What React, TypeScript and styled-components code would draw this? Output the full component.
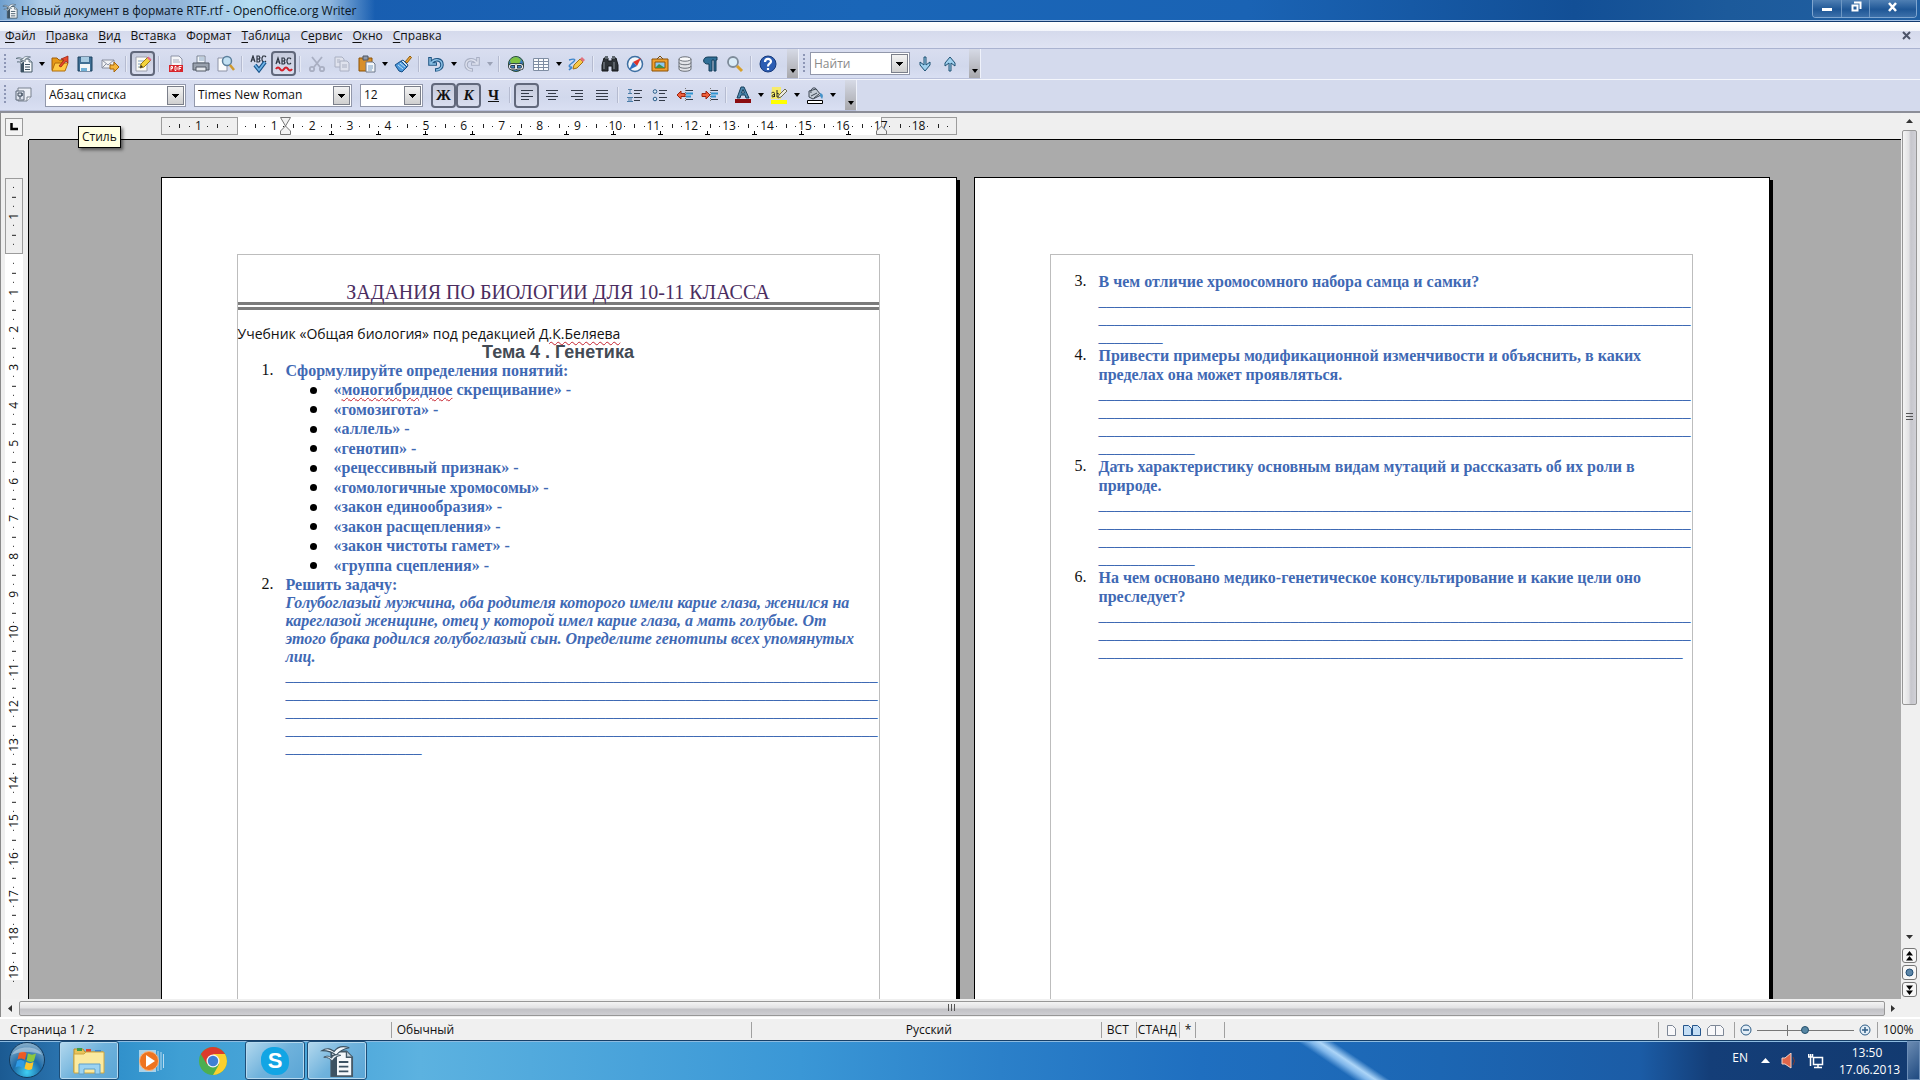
import React from "react";
import styled, { createGlobalStyle, css } from "styled-components";

const GlobalStyle = createGlobalStyle`
  * { box-sizing: border-box; }
  html, body { margin: 0; padding: 0; }
  body { background: #ababab; overflow: hidden; }
  button, select, input { font: inherit; color: inherit; margin: 0; }
`;

const UI_FONT = `"Open Sans", "Noto Sans", sans-serif`;
const DOC_FONT = `"Liberation Serif", "Times New Roman", serif`;

const Window = styled.div`
  height: 100vh;
  display: flex;
  flex-direction: column;
  font: 12px/16px ${UI_FONT};
  color: #111;
`;

/* ---------- title bar ---------- */

const TitleBar = styled.header`
  display: flex;
  height: 22px;
  flex: none;
  padding-left: 2px;
  border-bottom: 1px solid #12396f;
  box-shadow: inset 0 -1px 0 #a9c4e6;
  background:
    linear-gradient(90deg, #6f9fce 0, #b2cfe9 40px, #a3c0e0 90px, #8db0d6 170px, #b5dcf2 250px, #8fb7df 330px, rgba(80, 130, 200, 0) 375px),
    linear-gradient(90deg, #1758ab 0, #1a66b8 45%, #1a63b4 65%, #124f96 82%, #1c5a9b 90%, #2160a3 100%);
`;

const TitleText = styled.h1`
  margin: 0 auto 0 3px;
  font-size: 12px;
  line-height: 22px;
  font-weight: 400;
  color: #0c1826;
`;

const TitleIcon = styled.span`
  display: flex;
  align-items: center;
`;

const WindowButtons = styled.div`
  display: flex;
  height: 18px;
  margin-right: 3px;
  border: 1px solid #7fa6d0;
  border-top: 0;
  border-radius: 0 0 4px 4px;
  overflow: hidden;
`;

const WindowButton = styled.button<{ $wide?: boolean }>`
  display: flex;
  align-items: center;
  justify-content: center;
  width: ${(p) => (p.$wide ? 47 : 28)}px;
  padding: 0 0 3px;
  border: 0;
  border-left: 1px solid #6d97c4;
  background: linear-gradient(#4f7fb3, #1f5796 55%, #3c70aa);
  &:first-child { border-left: 0; }
`;

/* ---------- menu ---------- */

const MenuBar = styled.nav`
  display: flex;
  align-items: center;
  height: 26px;
  flex: none;
  padding: 2px 8px 0 5px;
  gap: 10px;
  background: linear-gradient(#fff 0, #f3f5fb 9px, #d5daec 9px, #dfe3f3 100%);
`;

const MenuItem = styled.button`
  padding: 0;
  border: 0;
  background: none;
  line-height: 18px;
  u { text-underline-offset: 2px; }
`;

const CloseDocument = styled(MenuItem)`
  display: flex;
  margin-left: auto;
`;

/* ---------- toolbars ---------- */

const ToolbarArea = styled.div`
  flex: none;
  background: #d4daed;
  border-bottom: 2px solid #8c8e98;
`;

const ToolbarRow = styled.div`
  display: flex;
  height: 31px;
  border-top: 1px solid #aab3d0;
  & + & {
    height: 32px;
    border-top-color: #f4f6fc;
  }
`;

const Toolbar = styled.div`
  display: flex;
  align-items: center;
  padding-left: 4px;
  border-right: 1px solid #eef1fa;
  border-bottom: 1px solid #b9c0da;
  background: linear-gradient(#d9def0, #d1d8ec 60%, #d9dff2);
`;

const Handle = styled.span`
  width: 2px;
  height: 20px;
  margin-right: 5px;
  background: repeating-linear-gradient(#8d96b5 0 2px, transparent 2px 4px);
`;

const ToolButton = styled.button<{ $pressed?: boolean }>`
  display: flex;
  align-items: center;
  justify-content: center;
  width: 25px;
  height: 25px;
  padding: 0;
  border: ${(p) => (p.$pressed ? "2px solid #61687b" : "0")};
  border-radius: 4px;
  background: ${(p) => (p.$pressed ? "linear-gradient(#c6cbdc, #d9deef)" : "none")};
`;

const DropButton = styled.button<{ $dim?: boolean }>`
  width: 11px;
  height: 24px;
  padding: 0;
  border: 0;
  background: none;
  &::after {
    content: "";
    display: block;
    width: 0;
    margin: 0 auto;
    border: 3px solid transparent;
    border-top: 4px solid ${(p) => (p.$dim ? "#9ba2b6" : "#000")};
    border-bottom: 0;
  }
`;

const Separator = styled.span`
  width: 2px;
  height: 16px;
  margin: 0 3px;
  border-left: 1px solid #b5bbd0;
  border-right: 1px solid #e6eaf6;
`;

const EndCap = styled.button`
  display: flex;
  align-items: flex-end;
  justify-content: center;
  align-self: stretch;
  width: 11px;
  margin-left: 7px;
  padding: 0 0 5px;
  border: 0;
  background: linear-gradient(#d6dae6, #a8a8ac);
  &::after {
    content: "";
    border: 3px solid transparent;
    border-top: 4px solid #000;
    border-bottom: 0;
  }
`;

const Combo = styled.label<{ $width: number; $dim?: boolean }>`
  display: grid;
  grid-template-columns: 1fr 19px;
  width: ${(p) => p.$width}px;
  height: 23px;
  margin-right: ${(p) => (p.$dim ? 2 : 8)}px;
  border: 1px solid #9298ab;
  background: #fff;
  color: ${(p) => (p.$dim ? "#8a8a8a" : "#111")};
  select, input {
    grid-area: 1 / 1 / 2 / 3;
    min-width: 0;
    width: 100%;
    padding: 0 20px 0 3px;
    border: 0;
    outline: 0;
    appearance: none;
    background: none;
    line-height: 20px;
  }
  input::placeholder { color: #8a8a8a; opacity: 1; }
  &::after {
    content: "";
    grid-area: 1 / 2;
    margin: 1px;
    border: 1px solid #7b7f8a;
    pointer-events: none;
    background:
      linear-gradient(#000, #000) 50% 7px / 7px 1px no-repeat,
      linear-gradient(#000, #000) 50% 8px / 5px 1px no-repeat,
      linear-gradient(#000, #000) 50% 9px / 3px 1px no-repeat,
      linear-gradient(#000, #000) 50% 10px / 1px 1px no-repeat,
      linear-gradient(#f3f3f3, #cfcfcf);
  }
`;

const Glyph = styled.span<{ $italic?: boolean; $underline?: boolean }>`
  font: bold 15px/18px ${DOC_FONT};
  font-style: ${(p) => (p.$italic ? "italic" : "normal")};
  text-decoration: ${(p) => (p.$underline ? "underline" : "none")};
`;

const StylesGroup = styled.div`
  margin-right: 9px;
`;

const TooltipAnchor = styled.div`
  position: relative;
`;

const Tooltip = styled.span`
  position: absolute;
  z-index: 5;
  left: 33px;
  top: 42px;
  padding: 1px 3px;
  border: 1px solid #000;
  background: #ffffe1;
  line-height: 18px;
  white-space: nowrap;
  box-shadow: 2px 2px 3px rgba(0, 0, 0, 0.5);
`;

/* ---------- work area ---------- */

const WorkArea = styled.main`
  flex: 1;
  min-height: 0;
  display: grid;
  grid-template: 27px minmax(0, 1fr) 18px / 28px minmax(0, 1fr) 19px;
  border-left: 1px solid #8a8a8a;
  background: #efefef;
`;

const Corner = styled.div`
  display: flex;
  align-items: center;
  justify-content: center;
  padding-right: 3px;
`;

const TabKind = styled.button`
  display: flex;
  align-items: center;
  justify-content: center;
  width: 18px;
  height: 18px;
  padding: 0;
  border: 1px solid #9a9a9a;
  background: #f3f3f3;
`;

const Spread = styled.div`
  display: grid;
  grid-template-columns: 796px 796px;
  justify-content: center;
  column-gap: 17px;
`;

const RulerStrip = styled(Spread)`
  align-items: center;
  height: 27px;
  border-bottom: 1px solid #000;
`;

const Ruler = styled.div`
  display: grid;
  grid-template: 18px / 77px 1fr 76px;
  color: #111;
`;

const RulerMargin = styled.span<{ $area: string }>`
  grid-area: ${(p) => p.$area};
  border: 1px solid #9c9c9c;
  background: #efefef;
`;

const RulerBody = styled.span<{ $area: string }>`
  grid-area: ${(p) => p.$area};
  background: #fff;
`;

const Scale = styled.div`
  grid-area: 1 / 1 / 2 / 4;
  display: flex;
`;

const ScaleCell = styled.span<{ $half?: "start" | "end" }>`
  flex: ${(p) => (p.$half ? 1 : 2)} 0 0;
  min-width: 0;
  text-align: center;
  line-height: 18px;
  ${(p) =>
    !p.$half &&
    css`
      background:
        linear-gradient(#222, #222) 0 50% / 1px 4px no-repeat,
        linear-gradient(#222, #222) 25% 50% / 1px 1px no-repeat,
        linear-gradient(#222, #222) 75% 50% / 1px 1px no-repeat;
    `}
  ${(p) =>
    p.$half === "start" &&
    css`background: linear-gradient(#222, #222) 50% 50% / 1px 1px no-repeat;`}
  ${(p) =>
    p.$half === "end" &&
    css`
      background:
        linear-gradient(#222, #222) 0 50% / 1px 4px no-repeat,
        linear-gradient(#222, #222) 50% 50% / 1px 1px no-repeat;
    `}
`;

const TabStops = styled.div`
  grid-area: 1 / 2;
  display: flex;
  align-items: flex-end;
  padding-left: 71px;
  overflow: hidden;
`;

const TabStop = styled.i`
  flex: none;
  width: 47px;
  height: 4px;
  background:
    linear-gradient(#000, #000) 22px 0 / 1px 4px no-repeat,
    linear-gradient(#000, #000) 20px 3px / 5px 1px no-repeat;
`;

const IndentMarkers = styled.div`
  grid-area: 1 / 1 / 2 / 4;
  display: flex;
  justify-content: space-between;
  padding: 0 70px 0 119px;
`;

const VRulerStrip = styled.div`
  padding: 38px 5px 0 4px;
  border-right: 1px solid #000;
  overflow: hidden;
`;

const VRuler = styled.div`
  display: grid;
  grid-template: 76px 726px / 18px;
`;

const VScale = styled.div`
  grid-area: 1 / 1 / 3 / 2;
  display: flex;
  flex-direction: column;
  height: 813px;
`;

const VCell = styled.span<{ $half?: boolean }>`
  flex: ${(p) => (p.$half ? 1 : 2)} 0 0;
  display: flex;
  align-items: center;
  justify-content: center;
  min-height: 0;
  writing-mode: vertical-rl;
  transform: rotate(180deg);
  line-height: 18px;
  background: ${(p) =>
    p.$half
      ? "linear-gradient(#222, #222) 50% 50% / 1px 1px no-repeat"
      : `linear-gradient(#222, #222) 50% 100% / 4px 1px no-repeat,
         linear-gradient(#222, #222) 50% 25% / 1px 1px no-repeat,
         linear-gradient(#222, #222) 50% 75% / 1px 1px no-repeat`};
`;

const Canvas = styled(Spread)`
  padding-top: 37px;
  overflow: hidden;
  background: #ababab;
`;

const Page = styled.article`
  padding: 76px 76px 0 75px;
  border: 1px solid #000;
  border-bottom: 0;
  background: #fff;
  box-shadow: 3px 3px 0 #000;
`;

const TextFrame = styled.div`
  height: 100%;
  border: 1px solid #bdbdbd;
  border-bottom: 0;
  font: 16px/18px ${DOC_FONT};
  color: #111;
  white-space: nowrap;
`;

const DocTitle = styled.h2`
  margin: 27px 0 0;
  border-bottom: 8px double #7b7b7b;
  font-size: 20px;
  line-height: 20px;
  font-weight: 400;
  text-align: center;
  color: #4b2d5f;
`;

const Source = styled.p`
  margin: 15px 0 0;
  font: 14px/18px ${UI_FONT};
`;

const Topic = styled.h3`
  margin: 0;
  font: bold 18px/18px "Liberation Sans", Arial, sans-serif;
  text-align: center;
  color: #434a54;
`;

const Misspelled = styled.span`
  text-decoration: underline wavy #c4202c 1px;
  text-underline-offset: 2px;
`;

const Tasks = styled.ol<{ $top?: number }>`
  margin: 0;
  padding: ${(p) => p.$top || 0}px 0 0 24px;
  list-style: none;
`;

const Task = styled.li`
  display: grid;
  grid-template-columns: 24px 1fr;
`;

const TaskBody = styled.div`
  font-weight: bold;
  color: #3f69b4;
`;

const Question = styled.p`
  margin: 0;
  line-height: 19px;
`;

const Problem = styled.p`
  margin: 0;
  font-style: italic;
`;

const Blanks = styled.div`
  padding-top: 1px;
  font-weight: 400;
`;

const Blank = styled.p`
  margin: 0;
`;

const Terms = styled.ul`
  margin: 0;
  padding: 0 0 0 24px;
  list-style: none;
`;

const Term = styled.li`
  display: flex;
  align-items: center;
  gap: 17px;
  line-height: 20px;
  &:nth-child(even) { line-height: 19px; }
  &::before {
    content: "";
    width: 7px;
    height: 7px;
    border-radius: 50%;
    background: #000;
  }
`;

/* ---------- scroll bars ---------- */

const VScroll = styled.div`
  grid-area: 1 / 3 / 3 / 4;
  display: flex;
  flex-direction: column;
  align-items: center;
  padding: 0 2px 2px 0;
  background: #f0f0f0;
`;

const ArrowButton = styled.button`
  display: flex;
  align-items: center;
  justify-content: center;
  width: 17px;
  height: 17px;
  padding: 0;
  border: 0;
  background: none;
`;

const VTrack = styled.div`
  flex: 1;
  display: flex;
  flex-direction: column;
`;

const VThumb = styled.div`
  display: flex;
  align-items: center;
  justify-content: center;
  width: 15px;
  height: 72%;
  border: 1px solid #979797;
  border-radius: 2px;
  background: linear-gradient(90deg, #f4f4f4, #e2e2e4 45%, #c6c6cc 60%, #d0d0d6);
`;

const NavButton = styled.button`
  display: flex;
  align-items: center;
  justify-content: center;
  width: 15px;
  height: 15px;
  margin-top: 2px;
  padding: 0;
  border: 1px solid #777;
  border-radius: 3px;
  background: #f7f7f7;
`;

const HScroll = styled.div`
  grid-area: 3 / 1 / 4 / 4;
  display: flex;
  align-items: center;
  padding: 0 18px 0 1px;
  background: #f0f0f0;
`;

const HThumb = styled.div`
  display: flex;
  align-items: center;
  justify-content: center;
  flex: 1;
  height: 15px;
  border: 1px solid #979797;
  border-radius: 2px;
  background: linear-gradient(#f4f4f4, #e2e2e4 45%, #c2c2c6 55%, #cfcfd3);
`;

/* ---------- status bar ---------- */

const StatusBar = styled.footer`
  display: flex;
  align-items: center;
  flex: none;
  height: 23px;
  padding: 1px 0 0 10px;
  border-top: 2px solid #fff;
  background: #f0f0f0;
`;

const StatusField = styled.span<{ $width?: number; $grow?: number; $center?: boolean; $tight?: boolean }>`
  display: flex;
  align-items: center;
  justify-content: ${(p) => (p.$center ? "center" : "flex-start")};
  ${(p) => (p.$grow ? css`flex: ${p.$grow} 0 0;` : css`flex: none; width: ${p.$width}px;`)}
  height: 16px;
  padding-left: ${(p) => (p.$tight ? 1 : 5)}px;
  border-left: 1px solid #a0a0a0;
  white-space: nowrap;
  &:first-child { border: 0; padding: 0; }
`;

const PlainButton = styled.button`
  display: flex;
  padding: 0;
  border: 0;
  background: none;
`;

const ViewModes = styled.span`
  display: flex;
  align-items: center;
  gap: 5px;
  padding-left: 2px;
`;

const ZoomSlider = styled.input`
  appearance: none;
  width: 97px;
  height: 16px;
  margin: 0 5px;
  background:
    linear-gradient(#777, #777) 0 50% / 100% 1px no-repeat,
    linear-gradient(#777, #777) 30px 50% / 1px 11px no-repeat;
  &::-webkit-slider-thumb {
    appearance: none;
    width: 8px;
    height: 8px;
    border: 1px solid #24506c;
    border-radius: 50%;
    background: #5686a3;
  }
`;

/* ---------- task bar ---------- */

const TaskBar = styled.nav`
  display: flex;
  align-items: stretch;
  flex: none;
  height: 40px;
  padding-left: 7px;
  border-top: 1px solid #174069;
  box-shadow: inset 0 1px 0 #8dbbe0;
  color: #fff;
  background: linear-gradient(90deg, #1b5a92 0, #2a73ae 60px, #2f8fca 110px, #3f9fd4 180px, #4ea8db 340px, #5cb2e0 420px, #48a2da 640px, #3a97d6 800px, #2b80c9 1000px, #1f6fc0 1200px, #1c66b3 1440px, #1b5ca6 1640px, #143e78 1710px, #123a70 100%);
`;

const StartButton = styled.button`
  width: 40px;
  margin-right: 12px;
  padding: 0;
  border: 0;
  background: none;
`;

const TaskButton = styled.button<{ $open?: boolean }>`
  display: flex;
  align-items: center;
  justify-content: center;
  width: 60px;
  margin-right: 2px;
  padding: 0;
  border: 1px solid ${(p) => (p.$open ? "#1d4e78" : "transparent")};
  border-radius: 3px;
  background: ${(p) => (p.$open ? "linear-gradient(135deg, #b4d9ee, #6fb2dc 50%, #5aa5d5)" : "none")};
  box-shadow: ${(p) => (p.$open ? "inset 0 0 0 1px #b5d9ef" : "none")};
`;

const LightStreak = styled.span`
  flex: 1;
  background: linear-gradient(34deg, transparent 551px, #7fb6ea 558px, #acd5f8 563px, transparent 571px);
`;

const Tray = styled.div`
  display: flex;
  align-items: center;
  gap: 11px;
`;

const Language = styled.span`
  padding-bottom: 6px;
  margin-right: 2px;
`;

const Clock = styled.time`
  text-align: center;
  line-height: 17px;
  margin: 0 12px 0 4px;
  width: 56px;
`;

const ShowDesktop = styled.button`
  width: 13px;
  padding: 0;
  border: 1px solid #6d8fb8;
  background: linear-gradient(135deg, #6b8bb2, #1f4a80);
`;

/* ---------- drawings ---------- */

const ICONS: Record<string, React.ReactNode> = {
  writer: (
    <>
      <path d="M6 4h8l3 3v10H6z" fill="#f6f9fb" stroke="#465a68" />
      <path d="M6 6v11h3V5z" fill="#3c5262" />
      <path d="M14 4v3h3" fill="#c5d4de" stroke="#465a68" strokeWidth=".7" />
      <path d="M1 3.500c3-2 5-.5 6.500.5 2-3 5-3 8-2-3 .5-5 1.500-7 4-2-2-4-2.500-7.500-2.500z" fill="#f2f7fa" stroke="#3c5262" strokeWidth=".6" />
      <path d="M2 7c2-1 3-.5 4 .5 1.500-2 3-2 5-1.500-2 .5-3.500 1-4.500 3C5 7.500 4 7 2 7z" fill="#f2f7fa" stroke="#3c5262" strokeWidth=".5" />
      <path d="M10 9.500h5M10 12h5M10 14.500h5" stroke="#3c5262" />
    </>
  ),
  open: (
    <>
      <path d="M1 15V3h5l2 2h4v10z" fill="#e79a17" stroke="#a15c08" />
      <path d="M1 16l3-8h13l-3 8z" fill="#ffc944" stroke="#b06c0c" />
      <path d="M8 11l5-6-3-1 7-3v7l-2-2-5 6z" fill="#e8482b" stroke="#8f1d0c" strokeWidth=".7" />
    </>
  ),
  save: (
    <>
      <path d="M2 2h14v14H2z" fill="#3f6f94" stroke="#1d4260" />
      <path d="M5 2h8v5H5z" fill="#a8cbe2" />
      <path d="M4 9h10v7H4z" fill="#f3f6f8" />
      <path d="M5 13h6v3H5z" fill="#6fb0d6" />
    </>
  ),
  mail: (
    <>
      <path d="M1 5h12v8H1z" fill="#f1f2f5" stroke="#8b90a0" />
      <path d="M1 5l6 5 6-5M1 13l4-4M13 13L9 9" fill="none" stroke="#8b90a0" />
      <path d="M9 10h4V7l5 5-5 5v-3H9z" fill="#f5b63c" stroke="#a8660a" />
    </>
  ),
  edit: (
    <>
      <path d="M2 2h11v14H2z" fill="#fbfbf4" stroke="#9b9fae" />
      <path d="M4 6h6M4 9h4M4 12h3" stroke="#7c9cbc" />
      <path d="M6 13l1-4 7-7 3 3-7 7z" fill="#f4d43c" stroke="#9b7a10" />
      <path d="M13 3l1.500-1.500 3 3L16 6z" fill="#e06a92" />
      <path d="M6 13l1-3 2 2z" fill="#333" />
    </>
  ),
  pdf: (
    <>
      <path d="M4 1h8l3 3v7H4z" fill="#f5f6f9" stroke="#8d93a6" />
      <path d="M6 5h6M6 7h7" stroke="#a7adbd" />
      <path d="M2 10h14v7H2z" fill="#d8262c" />
      <path d="M4 15.500v-4h1.500v2H4M8 11.500v4h1l1-1v-2l-1-1zM12 15.500v-4h2.500M12 13.500h2" fill="none" stroke="#fff" />
    </>
  ),
  print: (
    <>
      <path d="M5 1h8v7H5z" fill="#f2f6fa" stroke="#7b8494" />
      <path d="M7 3h5M7 5h5" stroke="#8aa6c2" />
      <path d="M1 8h16v7H1z" fill="#9aa2ae" stroke="#525a67" />
      <path d="M4 12h10v4H4z" fill="#e6e9ee" stroke="#525a67" />
    </>
  ),
  preview: (
    <>
      <path d="M1 3h9v13H1z" fill="#fbfcfd" stroke="#8d93a6" />
      <circle cx="10" cy="6" r="4.500" fill="#c2e0f3" stroke="#5b7f9c" strokeWidth="1.500" />
      <path d="M13 10l4 5" stroke="#d09a2e" strokeWidth="2.500" />
    </>
  ),
  check: (
    <>
      <path d="M1 7l2-6 2 6M2 5h2M7 1v6h2l1-1-1-2H7h2l1-1-1-2zM16 2l-1-1h-2l-1 2v2l1 2h2l1-1" fill="none" stroke="#2c3440" strokeWidth="1.200" />
      <path d="M5 10l4 5 6-8" fill="none" stroke="#17538a" strokeWidth="4" />
      <path d="M5 10l4 5 6-8" fill="none" stroke="#6db2e6" strokeWidth="1.800" />
    </>
  ),
  autocheck: (
    <>
      <path d="M1 9l2-6 2 6M2 7h2M7 3v6h2l1-1-1-2H7h2l1-1-1-2zM16 4l-1-1h-2l-1 2v2l1 2h2l1-1" fill="none" stroke="#2c3440" strokeWidth="1.200" />
      <path d="M1 14q2-3 4 0t4 0t4 0t4 0" fill="none" stroke="#d3202a" strokeWidth="2.200" />
    </>
  ),
  cut: (
    <g fill="none" stroke="#a9afc2" strokeWidth="1.800">
      <path d="M4 2l8 10M14 2L6 12" />
      <circle cx="4" cy="14" r="2.200" />
      <circle cx="14" cy="14" r="2.200" />
    </g>
  ),
  copy: (
    <g fill="#dfe2ed" stroke="#aab0c2">
      <path d="M2 2h7l2 2v8H2z" />
      <path d="M7 6h7l2 2v8H7z" />
      <path d="M4 5h3M4 7h3M9 10h5M9 12h5" />
    </g>
  ),
  paste: (
    <>
      <path d="M1 3h13v13H1z" fill="#d98f28" stroke="#8c5207" />
      <path d="M5 1h5v4H5z" fill="#8f98a8" stroke="#4c5563" />
      <path d="M8 7h7l2 2v8H8z" fill="#f4f7fa" stroke="#6b778a" />
      <path d="M10 11h5M10 13h5M10 15h4" stroke="#7ba0c4" />
    </>
  ),
  brush: (
    <>
      <path d="M11 7l5-6 1.500 1.500L13 8z" fill="#e8a33a" stroke="#8f5b0a" />
      <path d="M7 6l2-1 5 5-1 2z" fill="#cfe4f4" stroke="#174f87" />
      <path d="M1 10l6-4 6 6-5 5-3-1z" fill="#4a97da" stroke="#174f87" />
      <path d="M4 10l5 4M6 8l5 4" stroke="#bfe0f7" />
    </>
  ),
  undo: (
    <>
      <path d="M3 2v7h7M4 8c4-5 11-4 11 2 0 3-3 5-7 5" fill="none" stroke="#1f5684" strokeWidth="3.600" />
      <path d="M3 3v6h6M4 8c4-5 11-4 11 2 0 3-3 5-6 5" fill="none" stroke="#8ec3e8" strokeWidth="1.400" />
    </>
  ),
  redo: (
    <>
      <path d="M15 2v7H8M14 8C10 3 3 4 3 10c0 3 3 5 7 5" fill="none" stroke="#a9b0c4" strokeWidth="3.600" />
      <path d="M15 3v6H9M14 8C10 3 3 4 3 10c0 3 3 5 6 5" fill="none" stroke="#dde1ee" strokeWidth="1.400" />
    </>
  ),
  link: (
    <>
      <circle cx="9" cy="9" r="7.500" fill="#3c7fc0" stroke="#2b4d30" />
      <path d="M3 5c4-4 8-4 11 0l-2 4-5-1-3 2z" fill="#7ec243" />
      <rect x="2.500" y="9.500" width="7" height="4.500" rx="2.200" fill="none" stroke="#20282e" strokeWidth="2.600" />
      <rect x="8.500" y="9.500" width="7" height="4.500" rx="2.200" fill="none" stroke="#20282e" strokeWidth="2.600" />
      <rect x="2.500" y="9.500" width="7" height="4.500" rx="2.200" fill="none" stroke="#e5eaee" strokeWidth="1.200" />
      <rect x="8.500" y="9.500" width="7" height="4.500" rx="2.200" fill="none" stroke="#e5eaee" strokeWidth="1.200" />
    </>
  ),
  table: (
    <>
      <path d="M1 3h16v13H1z" fill="#fbfcfe" />
      <path d="M1.500 3.500h15v12h-15zM1.500 6.500h15M1.500 9.500h15M1.500 12.500h15M6.500 3.500v12M11.500 3.500v12" fill="none" stroke="#7f8da3" />
    </>
  ),
  draw: (
    <>
      <path d="M1 5c7-2 7 0 3 3s-3 4-1 4-1 2-2 3" fill="none" stroke="#3f86cb" strokeWidth="1.500" />
      <path d="M5 14l1-4 6-6 3 3-6 6z" fill="#f6c84a" stroke="#a3700f" />
      <path d="M12 4l2-2 3 3-2 2z" fill="#e2707c" />
    </>
  ),
  find: (
    <>
      <path d="M3 3h4v3h4V3h4l2 7v6h-6v-5H7v5H1v-6z" fill="#2e3338" stroke="#15181b" />
      <path d="M4 1h3v3H4zM11 1h3v3h-3z" fill="#5f676f" />
      <path d="M3 7v7M13 7v7" stroke="#8b949c" />
    </>
  ),
  compass: (
    <>
      <circle cx="9" cy="9" r="7.500" fill="#f2f6fa" stroke="#3d6fa2" strokeWidth="1.500" />
      <path d="M15 3l-4 8-4-4z" fill="#e0352b" />
      <path d="M3 15l4-8 4 4z" fill="#2f6fc0" />
    </>
  ),
  gallery: (
    <>
      <path d="M6 4l3-3 3 3" fill="none" stroke="#7b4d08" />
      <path d="M1 4h16v12H1z" fill="#f0a02c" stroke="#8c5207" />
      <path d="M4 7h10v6H4z" fill="#8cc8f0" stroke="#8c5207" />
      <path d="M4 13l4-4 6 4z" fill="#3f8f4a" />
    </>
  ),
  database: (
    <g fill="#e2e4e8" stroke="#6b7078">
      <path d="M3 4v10c0 3 12 3 12 0V4" />
      <path d="M3 7.500c0 3 12 3 12 0M3 11c0 3 12 3 12 0" fill="none" />
      <ellipse cx="9" cy="4" rx="6" ry="2.200" fill="#f7f8fa" />
    </g>
  ),
  marks: <path d="M8 16V9C1 10 1 2 7 2h9v3h-1v11h-2V5h-2v11z" fill="#2f6f96" stroke="#143d58" />,
  zoom: (
    <>
      <circle cx="7" cy="7" r="5" fill="#d9ebf7" stroke="#7e8b99" strokeWidth="1.800" />
      <path d="M11 11l5 5" stroke="#d7a02c" strokeWidth="3" />
    </>
  ),
  help: (
    <>
      <circle cx="9" cy="9" r="8" fill="#2c5db3" stroke="#173a7c" />
      <path d="M6 7c0-4 6-4 6-.500 0 2-3 2-3 5M9 13v2" fill="none" stroke="#fff" strokeWidth="2.200" />
    </>
  ),
  down: <path d="M8 2h2v8l4-3v3l-5 6-5-6V7l4 3z" fill="#9fd0ee" stroke="#1d5072" />,
  up: <path d="M8 16h2V8l4 3V8L9 2 4 8v3l4-3z" fill="#9fd0ee" stroke="#1d5072" />,
  styles: (
    <>
      <path d="M3 2h13v9l-4 4H3z" fill="#eceff6" stroke="#79818f" />
      <path d="M12 15v-4h4" fill="#fff" stroke="#79818f" />
      <path d="M1 5h8v9H1z" fill="#dfe4ee" stroke="#5c6878" />
      <path d="M3 7h4v3H3zM5 10v3M7 7v3" fill="none" stroke="#3d4a5a" />
    </>
  ),
  left: <path d="M3 4.500h12M3 7.500h8M3 10.500h12M3 13.500h8" stroke="#333b48" />,
  center: <path d="M3 4.500h12M5 7.500h8M3 10.500h12M5 13.500h8" stroke="#333b48" />,
  right: <path d="M3 4.500h12M7 7.500h8M3 10.500h12M7 13.500h8" stroke="#333b48" />,
  justify: <path d="M3 4.500h12M3 7.500h12M3 10.500h12M3 13.500h12" stroke="#333b48" />,
  numbers: (
    <>
      <path d="M8 4.500h8M8 7.500h6M8 11.500h8M8 14.500h6" stroke="#333b48" />
      <path d="M2 3.500h4M4 3.500v4M2 7.500h4M1 11.500h6M3 11.500v4M5 11.500v4M1 15.500h6" stroke="#4b7da8" />
    </>
  ),
  bullets: (
    <>
      <path d="M8 4.500h8M8 7.500h6M8 11.500h8M8 14.500h6" stroke="#333b48" />
      <circle cx="4" cy="5.500" r="1.800" fill="#d5e6f4" stroke="#2d5f8b" />
      <circle cx="4" cy="13" r="1.800" fill="#d5e6f4" stroke="#2d5f8b" />
    </>
  ),
  outdent: (
    <>
      <path d="M9.500 2v14" stroke="#777" strokeDasharray="1 1" />
      <path d="M10 4.500h7M10 13.500h7" stroke="#333b48" />
      <path d="M10 7.500h7M10 10.500h5" stroke="#2f94cf" strokeWidth="2" />
      <path d="M1 9l4-4v2.500h4v3H5V13z" fill="#f0603c" stroke="#9b2410" />
    </>
  ),
  indent: (
    <>
      <path d="M9.500 2v14" stroke="#777" strokeDasharray="1 1" />
      <path d="M10 4.500h7M10 13.500h7" stroke="#333b48" />
      <path d="M10 7.500h7M10 10.500h5" stroke="#2f94cf" strokeWidth="2" />
      <path d="M9 9L5 5v2.500H1v3h4V13z" fill="#f0603c" stroke="#9b2410" />
    </>
  ),
  fontcolor: (
    <>
      <path d="M3 12L7 1h3l5 11h-3l-1-3H7l-1 3zM7.500 7h3L9 3.500z" fill="#4d88ad" stroke="#173f5c" />
      <path d="M1 13h16v4H1z" fill="#8b0d10" />
    </>
  ),
  highlight: (
    <>
      <path d="M2 1h9v12H1z" fill="#ffef4a" opacity=".8" />
      <path d="M1 14h16v4H1z" fill="#ffff00" />
      <path d="M1.500 7c1-1 3-1 3 .500V11M4.500 8.500c-3 0-3 2.500-1.500 2.500l1.500-1M7 4v7c3 1 3.500-4 0-3.500" fill="none" stroke="#222" />
      <path d="M8 12l1-3 6-6 2 2-6 6z" fill="#ecebdf" stroke="#6d6a4d" />
    </>
  ),
  fill: (
    <>
      <path d="M3 5l7-2 5 6-8 4-4-2z" fill="#c4ccd6" stroke="#3c4652" />
      <path d="M5 7c-1-5 4-7 6-3M5 10l6-3M8 12l5-4" fill="none" stroke="#3c4652" />
      <path d="M14 7c4 1 3 4 2 6l-2-3z" fill="#4592c9" />
      <path d="M1.500 14.500h15v3h-15z" fill="#fff" stroke="#000" />
    </>
  ),
};

const Icon = ({ name, size = 18 }: { name: string; size?: number }) => (
  <svg width={size} height={size} viewBox="0 0 18 18" aria-hidden="true">
    {ICONS[name]}
  </svg>
);

type Tool = { icon: string; label: string; pressed?: boolean; drop?: boolean; dim?: boolean; gap?: boolean };

const STANDARD: Tool[] = [
  { icon: "writer", label: "Создать", drop: true },
  { icon: "open", label: "Открыть" },
  { icon: "save", label: "Сохранить" },
  { icon: "mail", label: "Отправить по почте", gap: true },
  { icon: "edit", label: "Редактировать", pressed: true, gap: true },
  { icon: "pdf", label: "Экспорт в PDF" },
  { icon: "print", label: "Печать" },
  { icon: "preview", label: "Просмотр страницы", gap: true },
  { icon: "check", label: "Орфография" },
  { icon: "autocheck", label: "Автопроверка", pressed: true, gap: true },
  { icon: "cut", label: "Вырезать" },
  { icon: "copy", label: "Копировать" },
  { icon: "paste", label: "Вставить", drop: true },
  { icon: "brush", label: "Копировать формат", gap: true },
  { icon: "undo", label: "Отменить", drop: true },
  { icon: "redo", label: "Вернуть", drop: true, dim: true, gap: true },
  { icon: "link", label: "Гиперссылка" },
  { icon: "table", label: "Вставить таблицу", drop: true },
  { icon: "draw", label: "Рисунки", gap: true },
  { icon: "find", label: "Найти и заменить" },
  { icon: "compass", label: "Навигатор" },
  { icon: "gallery", label: "Галерея" },
  { icon: "database", label: "Источники данных" },
  { icon: "marks", label: "Непечатаемые символы" },
  { icon: "zoom", label: "Масштаб", gap: true },
  { icon: "help", label: "Справка" },
];

const PARAGRAPH: Tool[] = [
  { icon: "left", label: "По левому краю", pressed: true },
  { icon: "center", label: "По центру" },
  { icon: "right", label: "По правому краю" },
  { icon: "justify", label: "По ширине", gap: true },
  { icon: "numbers", label: "Нумерация" },
  { icon: "bullets", label: "Маркеры" },
  { icon: "outdent", label: "Уменьшить отступ" },
  { icon: "indent", label: "Увеличить отступ", gap: true },
  { icon: "fontcolor", label: "Цвет символов", drop: true },
  { icon: "highlight", label: "Выделение цветом", drop: true },
  { icon: "fill", label: "Фон абзаца", drop: true },
];

const Tools = ({ items }: { items: Tool[] }) => (
  <>
    {items.map((t) => (
      <React.Fragment key={t.icon}>
        <ToolButton $pressed={t.pressed} aria-label={t.label}>
          <Icon name={t.icon} />
        </ToolButton>
        {t.drop && <DropButton $dim={t.dim} aria-label={`${t.label}: меню`} />}
        {t.gap && <Separator />}
      </React.Fragment>
    ))}
  </>
);

const MENU: [string, string, string][] = [
  ["", "Ф", "айл"],
  ["", "П", "равка"],
  ["", "В", "ид"],
  ["Вст", "а", "вка"],
  ["Фо", "р", "мат"],
  ["", "Т", "аблица"],
  ["С", "е", "рвис"],
  ["", "О", "кно"],
  ["", "С", "правка"],
];

const TERMS = ["гомозигота", "аллель", "генотип", "рецессивный признак", "гомологичные хромосомы", "закон единообразия", "закон расщепления", "закон чистоты гамет", "группа сцепления"];

const QUESTIONS = [
  { n: 3, text: ["В чем отличие хромосомного набора самца и самки?"], blanks: [74, 74, 8] },
  { n: 4, text: ["Привести примеры модификационной изменчивости и объяснить, в каких", "пределах она может проявляться."], blanks: [74, 74, 74, 12] },
  { n: 5, text: ["Дать характеристику основным видам мутаций и рассказать об их роли в", "природе."], blanks: [74, 74, 74, 12] },
  { n: 6, text: ["На чем основано медико-генетическое консультирование и какие цели оно", "преследует?"], blanks: [74, 74, 73] },
];

const PROBLEM = [
  "Голубоглазый мужчина, оба родителя которого имели карие глаза, женился на",
  "кареглазой женщине, отец у которой имел карие глаза, а мать голубые. От",
  "этого брака родился голубоглазый сын. Определите генотипы всех упомянутых",
  "лиц.",
];

const AnswerLines = ({ lengths }: { lengths: number[] }) => (
  <Blanks>
    {lengths.map((n, i) => <Blank key={i}>{"_".repeat(n)}</Blank>)}
  </Blanks>
);

const cm = (from: number, to: number) => Array.from({ length: to - from + 1 }, (_, i) => Math.abs(from + i) || "");

const Flag = () => (
  <svg width="38" height="38" viewBox="0 0 38 38" aria-hidden="true">
    <defs>
      <radialGradient id="orb" cx=".5" cy=".85" r=".8">
        <stop offset="0" stopColor="#3fd0f4" />
        <stop offset=".5" stopColor="#1d6ba8" />
        <stop offset="1" stopColor="#7fa9c8" />
      </radialGradient>
    </defs>
    <circle cx="19" cy="19" r="17.500" fill="url(#orb)" stroke="#12395c" />
    <path d="M11 12c3-2 5-1.500 7.500 0L17 19c-3-2-5-2-7.500-.500z" fill="#ee5a24" />
    <path d="M20 12.500c3 1.500 5 1.500 8 0L26 20c-3 1.500-5 1-7.500-.500z" fill="#8cc63f" />
    <path d="M9 20c3-1.500 5-1 7.500.500L15 27c-3-1.500-5-2-7.500-.500z" fill="#2f9be6" />
    <path d="M18 21c3 1.500 5 1.500 7.500 0L24 28c-3 1.500-5 1-7.500-.500z" fill="#fcc52c" />
    <path d="M4 14C7 4 31 4 34 14 28 10 10 10 4 14z" fill="#fff" opacity=".35" />
  </svg>
);

const Explorer = () => (
  <svg width="34" height="32" viewBox="0 0 34 32" aria-hidden="true">
    <path d="M2 27V4h9l2 3h18v20z" fill="#e9c45a" stroke="#b98e28" />
    <path d="M5 3h5v3H5z" fill="#3f9b46" />
    <path d="M14 4h5v3h-5z" fill="#d8442e" />
    <path d="M23 5h6v3h-6z" fill="#3c86cf" />
    <path d="M2 28V9h10l2-2h18v21z" fill="#fbeaa0" stroke="#cfa63e" />
    <path d="M7 29V19h21v10h-5v-5H12v5z" fill="#9cd3f2" stroke="#5e9fc9" />
  </svg>
);

const Media = () => (
  <svg width="30" height="28" viewBox="0 0 30 28" aria-hidden="true">
    <path d="M3 3h17v22H3z" fill="#a8d2ea" />
    <path d="M22 4v20M25 5v18M27.500 7v14" stroke="#b7dbf0" />
    <circle cx="13" cy="14" r="9.500" fill="#ee7420" stroke="#f7b27c" />
    <path d="M10 8l9 6-9 6z" fill="#fff" />
  </svg>
);

const Chrome = () => (
  <svg width="30" height="30" viewBox="0 0 30 30" aria-hidden="true">
    <circle cx="15" cy="15" r="14" fill="#4caf50" />
    <path d="M15 15L2.900 8A14 14 0 0 1 27.100 8z" fill="#dd3b2c" />
    <path d="M15 8h12.100A14 14 0 0 1 15 29l6-10.500z" fill="#fbd02f" />
    <path d="M2.900 8L9 18.500 15 8z" fill="#dd3b2c" />
    <circle cx="15" cy="15" r="6.500" fill="#f3f5f7" />
    <circle cx="15" cy="15" r="5.200" fill="#3f7fd4" />
  </svg>
);

const SkypeMark = styled.span`
  display: flex;
  align-items: center;
  justify-content: center;
  width: 28px;
  height: 28px;
  border-radius: 12px 14px 12px 14px;
  background: #12a5e4;
  color: #fff;
  font: bold 22px/28px "Liberation Sans", Arial, sans-serif;
`;

export default function App() {
  return (
    <>
      <GlobalStyle />
      <Window>
        <TitleBar>
          <TitleIcon><Icon name="writer" size={16} /></TitleIcon>
          <TitleText>Новый документ в формате RTF.rtf - OpenOffice.org Writer</TitleText>
          <WindowButtons>
            <WindowButton aria-label="Свернуть">
              <svg width="12" height="12"><path d="M1 7h10v3H1z" fill="#fff" /></svg>
            </WindowButton>
            <WindowButton aria-label="Восстановить">
              <svg width="12" height="12"><path d="M4 1.500h6.500V8M2.500 4.500h5v5h-5z" fill="none" stroke="#fff" strokeWidth="2" /></svg>
            </WindowButton>
            <WindowButton $wide aria-label="Закрыть">
              <svg width="12" height="12"><path d="M2 2l7 8M9 2l-7 8" stroke="#fff" strokeWidth="2.500" /></svg>
            </WindowButton>
          </WindowButtons>
        </TitleBar>

        <MenuBar>
          {MENU.map(([a, b, c]) => (
            <MenuItem key={a + b + c}>{a}<u>{b}</u>{c}</MenuItem>
          ))}
          <CloseDocument aria-label="Закрыть документ">
            <svg width="10" height="10"><path d="M1 1l7 7M8 1L1 8" stroke="#4c5468" strokeWidth="2" /></svg>
          </CloseDocument>
        </MenuBar>

        <ToolbarArea>
          <ToolbarRow>
            <Toolbar>
              <Handle />
              <Tools items={STANDARD} />
              <EndCap aria-label="Параметры панели" />
            </Toolbar>
            <Toolbar>
              <Handle />
              <Combo $width={100} $dim>
                <input aria-label="Найти" placeholder="Найти" />
              </Combo>
              <ToolButton aria-label="Найти далее"><Icon name="down" /></ToolButton>
              <ToolButton aria-label="Найти ранее"><Icon name="up" /></ToolButton>
              <EndCap aria-label="Параметры панели поиска" />
            </Toolbar>
          </ToolbarRow>
          <ToolbarRow>
            <Toolbar>
              <Handle />
              <StylesGroup>
                <ToolButton aria-label="Стили"><Icon name="styles" /></ToolButton>
              </StylesGroup>
              <TooltipAnchor>
                <Combo $width={141}>
                  <select aria-label="Стиль"><option>Абзац списка</option></select>
                </Combo>
                <Tooltip role="tooltip">Стиль</Tooltip>
              </TooltipAnchor>
              <Combo $width={158}>
                <select aria-label="Гарнитура"><option>Times New Roman</option></select>
              </Combo>
              <Combo $width={63}>
                <select aria-label="Кегль"><option>12</option></select>
              </Combo>
              <ToolButton $pressed aria-label="Жирный"><Glyph>Ж</Glyph></ToolButton>
              <ToolButton $pressed aria-label="Курсив"><Glyph $italic>К</Glyph></ToolButton>
              <ToolButton aria-label="Подчёркнутый"><Glyph $underline>Ч</Glyph></ToolButton>
              <Separator />
              <Tools items={PARAGRAPH} />
              <EndCap aria-label="Параметры панели форматирования" />
            </Toolbar>
          </ToolbarRow>
        </ToolbarArea>

        <WorkArea>
          <Corner>
            <TabKind aria-label="Тип табуляции">
              <svg width="8" height="8"><path d="M1.500 0v6H8" fill="none" stroke="#000" strokeWidth="2.500" /></svg>
            </TabKind>
          </Corner>
          <RulerStrip>
            <Ruler>
              <RulerMargin $area="1 / 1" />
              <RulerBody $area="1 / 2" />
              <RulerMargin $area="1 / 3" />
              <Scale>
                <ScaleCell $half="start" />
                {cm(-1, 18).map((n, i) => <ScaleCell key={i}>{n}</ScaleCell>)}
                <ScaleCell $half="end" />
              </Scale>
              <TabStops>
                {Array.from({ length: 12 }, (_, i) => <TabStop key={i} />)}
              </TabStops>
              <IndentMarkers>
                <svg width="11" height="18">
                  <path d="M.5.5h10L5.500 9zM5.500 9l5 5v3.500H.5V14z" fill="#f2f2f2" stroke="#777" />
                </svg>
                <svg width="11" height="18">
                  <path d="M5.500 9l5 5v3.500H.5V14z" fill="#f2f2f2" stroke="#777" />
                </svg>
              </IndentMarkers>
            </Ruler>
          </RulerStrip>

          <VRulerStrip>
            <VRuler>
              <RulerMargin $area="1 / 1" />
              <RulerBody $area="2 / 1" />
              <VScale>
                <VCell $half />
                {cm(-1, 19).map((n, i) => <VCell key={i}>{n}</VCell>)}
              </VScale>
            </VRuler>
          </VRulerStrip>

          <Canvas>
            <Page>
              <TextFrame>
                <DocTitle>ЗАДАНИЯ ПО БИОЛОГИИ ДЛЯ 10-11 КЛАССА</DocTitle>
                <Source>Учебник «Общая биология» под редакцией <Misspelled>Д.К.Беляева</Misspelled></Source>
                <Topic>Тема 4 . Генетика</Topic>
                <Tasks>
                  <Task>
                    <span>1.</span>
                    <TaskBody>
                      <Question>Сформулируйте определения понятий:</Question>
                      <Terms>
                        <Term><span>«<Misspelled>моногибридное</Misspelled> скрещивание» -</span></Term>
                        {TERMS.map((t) => <Term key={t}><span>«{t}» -</span></Term>)}
                      </Terms>
                    </TaskBody>
                  </Task>
                  <Task>
                    <span>2.</span>
                    <TaskBody>
                      <Question>Решить задачу:</Question>
                      {PROBLEM.map((p) => <Problem key={p}>{p}</Problem>)}
                      <AnswerLines lengths={[74, 74, 74, 74, 17]} />
                    </TaskBody>
                  </Task>
                </Tasks>
              </TextFrame>
            </Page>
            <Page>
              <TextFrame>
                <Tasks $top={17}>
                  {QUESTIONS.map((q) => (
                    <Task key={q.n}>
                      <span>{q.n}.</span>
                      <TaskBody>
                        {q.text.map((t) => <Question key={t}>{t}</Question>)}
                        <AnswerLines lengths={q.blanks} />
                      </TaskBody>
                    </Task>
                  ))}
                </Tasks>
              </TextFrame>
            </Page>
          </Canvas>

          <VScroll>
            <ArrowButton aria-label="Вверх"><svg width="7" height="5"><path d="M0 4l3.500-4L7 4z" fill="#333" /></svg></ArrowButton>
            <VTrack>
              <VThumb><svg width="8" height="9"><path d="M0 .5h7M0 3.500h7M0 6.500h7" stroke="#555" /></svg></VThumb>
            </VTrack>
            <ArrowButton aria-label="Вниз"><svg width="7" height="5"><path d="M0 0h7L3.500 4z" fill="#333" /></svg></ArrowButton>
            <NavButton aria-label="Предыдущая страница"><svg width="9" height="10"><path d="M1 4.500L4.500 0 8 4.500zM1 9.500L4.500 5 8 9.500z" /></svg></NavButton>
            <NavButton aria-label="Навигация"><svg width="9" height="9"><circle cx="4.500" cy="4.500" r="3.500" fill="#5c86a8" stroke="#1f4c74" /></svg></NavButton>
            <NavButton aria-label="Следующая страница"><svg width="9" height="10"><path d="M1 .5h7L4.500 5zM1 5.500h7L4.500 10z" /></svg></NavButton>
          </VScroll>

          <HScroll>
            <ArrowButton aria-label="Влево"><svg width="5" height="7"><path d="M4 0v7L0 3.500z" fill="#333" /></svg></ArrowButton>
            <HThumb><svg width="9" height="8"><path d="M.5 0v7M3.500 0v7M6.500 0v7" stroke="#555" /></svg></HThumb>
            <ArrowButton aria-label="Вправо"><svg width="5" height="7"><path d="M0 0v7l4-3.500z" fill="#333" /></svg></ArrowButton>
          </HScroll>
        </WorkArea>

        <StatusBar>
          <StatusField $grow={385}>Страница 1 / 2</StatusField>
          <StatusField $grow={358}>Обычный</StatusField>
          <StatusField $grow={348} $center>Русский</StatusField>
          <StatusField $width={35}>ВСТ</StatusField>
          <StatusField $width={43} $tight>СТАНД</StatusField>
          <StatusField $width={16}>*</StatusField>
          <StatusField $width={29} />
          <StatusField $grow={433} />
          <StatusField $width={76}>
            <ViewModes>
              <PlainButton aria-label="Одна страница"><svg width="11" height="13"><path d="M1.500 1.500h5l3 3v7h-8z" fill="#f8f8fa" stroke="#7d8796" /></svg></PlainButton>
              <PlainButton aria-label="Несколько страниц"><svg width="20" height="13"><path d="M1.500 1.500h5l3 3v7h-8zM10.500 1.500h5l3 3v7h-8z" fill="#c4def5" stroke="#24558c" /></svg></PlainButton>
              <PlainButton aria-label="Режим книги"><svg width="18" height="13"><path d="M.5 4.500l3-3h5v10h-8zM8.500 1.500h5l3 3v7h-8z" fill="#f8f8fa" stroke="#7d8796" /></svg></PlainButton>
            </ViewModes>
          </StatusField>
          <StatusField $width={143}>
            <PlainButton aria-label="Уменьшить масштаб"><svg width="12" height="12"><circle cx="6" cy="6" r="5" fill="#e3eef7" stroke="#2f5d86" /><path d="M3 6h6" stroke="#2f5d86" strokeWidth="1.500" /></svg></PlainButton>
            <ZoomSlider type="range" aria-label="Масштаб" min={0} max={100} defaultValue={49} />
            <PlainButton aria-label="Увеличить масштаб"><svg width="12" height="12"><circle cx="6" cy="6" r="5" fill="#e3eef7" stroke="#2f5d86" /><path d="M3 6h6M6 3v6" stroke="#2f5d86" strokeWidth="1.500" /></svg></PlainButton>
          </StatusField>
          <StatusField $width={43}>100%</StatusField>
        </StatusBar>

        <TaskBar>
          <StartButton aria-label="Пуск"><Flag /></StartButton>
          <TaskButton $open aria-label="Проводник"><Explorer /></TaskButton>
          <TaskButton aria-label="Проигрыватель"><Media /></TaskButton>
          <TaskButton aria-label="Chrome"><Chrome /></TaskButton>
          <TaskButton $open aria-label="Skype"><SkypeMark>S</SkypeMark></TaskButton>
          <TaskButton $open aria-label="Writer"><Icon name="writer" size={34} /></TaskButton>
          <LightStreak />
          <Tray>
            <Language>EN</Language>
            <PlainButton aria-label="Скрытые значки"><svg width="9" height="5"><path d="M0 5l4.500-5L9 5z" fill="#fff" /></svg></PlainButton>
            <PlainButton aria-label="Громкость"><svg width="16" height="16"><path d="M1 5h3l6-5v15L4 11H1z" fill="#e0664a" stroke="#f2d3c8" /><path d="M12 4q3 4 0 8" fill="none" stroke="#7a3a34" /></svg></PlainButton>
            <PlainButton aria-label="Сеть"><svg width="16" height="16"><path d="M5.500 4.500h9v7h-9zM10 12v2.500M6 14.500h8M2.500 1v4M.5 1v3h4V1M2.500 5v8" fill="none" stroke="#fff" strokeWidth="1.500" /></svg></PlainButton>
            <Clock>13:50<br />17.06.2013</Clock>
          </Tray>
          <ShowDesktop aria-label="Показать рабочий стол" />
        </TaskBar>
      </Window>
    </>
  );
}
